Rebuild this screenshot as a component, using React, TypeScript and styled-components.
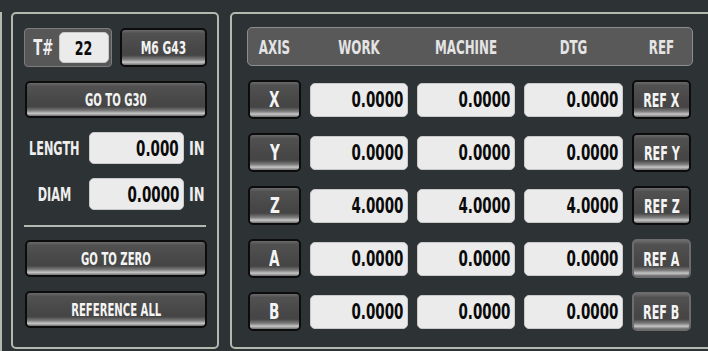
import React from 'react';
import styled, { createGlobalStyle } from 'styled-components';

const GlobalStyle = createGlobalStyle`
  html, body {
    margin: 0;
    padding: 0;
    background: #2d3235;
    overflow: hidden;
  }
  body {
    font-family: "DejaVu Sans Condensed", "DejaVu Sans", "Liberation Sans", sans-serif;
    font-weight: 700;
  }
`;

const Screen = styled.div`
  display: flex;
  align-items: flex-start;
  width: 708px;
  height: 351px;
  padding-top: 12px;
  box-sizing: border-box;
  overflow: hidden;
`;

const EdgeStub = styled.div`
  width: 0;
  height: 345px;
  border-right: 2px solid #b3b8b0;
  margin-right: 9px;
  flex-shrink: 0;
`;

const Panel = styled.div<{ $width: number }>`
  width: ${(p) => p.$width}px;
  height: 337px;
  flex-shrink: 0;
  box-sizing: border-box;
  border: 2px solid #b3b8b0;
  border-radius: 5px;
`;

const LeftPanel = styled(Panel)`
  display: flex;
  flex-direction: column;
  gap: 14px;
  padding: 14px 11px 0 11px;
`;

const RightPanel = styled(Panel)`
  margin-left: 11px;
  padding: 13px 0 0 15px;
  display: flex;
  flex-direction: column;
  gap: 14px;
`;

// condensed look: the reference face is much narrower than any installed one
const Caption = styled.span<{ $scale?: number; $origin?: string }>`
  display: inline-block;
  white-space: nowrap;
  transform: scaleX(${(p) => p.$scale ?? 0.66});
  transform-origin: ${(p) => p.$origin ?? 'center'};
`;

const Btn = styled.div<{ $h?: number; $size?: number; $muted?: boolean }>`
  height: ${(p) => p.$h ?? 37}px;
  box-sizing: border-box;
  display: flex;
  align-items: center;
  justify-content: center;
  border: 2px solid ${(p) => (p.$muted ? '#6c6c6c' : '#0c0c0c')};
  border-radius: 5px;
  color: #f4f4f4;
  font-size: ${(p) => p.$size ?? 17}px;
  background: linear-gradient(
    to bottom,
    #6a6a6a 0%,
    #515151 10%,
    #474747 55%,
    #454545 72%,
    #7d7d7d 84%,
    #c6c6c6 92%,
    #6e6e6e 100%
  );
`;

const ToolRow = styled.div`
  display: flex;
  gap: 8px;
  height: 39px;
`;

const ToolBox = styled.div`
  width: 88px;
  box-sizing: border-box;
  display: flex;
  align-items: center;
  justify-content: space-between;
  padding: 0 2px 0 4px;
  background: #575757;
  border: 1px solid #7c7c7c;
  border-radius: 4px;
  color: #eeeeee;
  font-size: 21px;
`;

const Entry = styled.div<{ $w?: number; $h?: number; $center?: boolean; $size?: number }>`
  ${(p) => (p.$w ? `width: ${p.$w}px;` : 'flex: 1;')}
  height: ${(p) => p.$h ?? 34}px;
  box-sizing: border-box;
  display: flex;
  align-items: center;
  justify-content: ${(p) => (p.$center ? 'center' : 'flex-end')};
  padding-right: ${(p) => (p.$center ? 0 : 4)}px;
  background: #ebebeb;
  border: 1px solid #c9c9c9;
  border-radius: 5px;
  color: #0a0a0a;
  font-size: ${(p) => p.$size ?? 22}px;
`;

const ToolBtn = styled(Btn)`
  flex: 1;
  margin-right: -1px;
`;

const FieldRow = styled.div`
  display: grid;
  grid-template-columns: 60px 95px auto;
  column-gap: 5px;
  align-items: center;
  height: 32px;
  color: #eeeeee;
  font-size: 19px;
`;

const FieldLabel = styled.div`
  display: flex;
  justify-content: center;
`;

const Unit = styled.div`
  display: flex;
  margin-left: 0;
  font-size: 20px;
`;

const Divider = styled.div`
  height: 2px;
  margin: 1px 0 -1px;
  background: #b3b8b0;
`;

const WideBtn = styled(Btn)`
  margin: 0 -1px 0 1px;
`;

const Grid = styled.div`
  display: grid;
  grid-template-columns: 53px 98px 98px 99px 59px;
  column-gap: 9px;
  align-items: center;
`;

const Header = styled(Grid)`
  width: 446px;
  height: 39px;
  box-sizing: border-box;
  background: #595959;
  border: 1px solid #8d8d8d;
  border-radius: 5px;
  color: #e4e4e4;
  font-size: 20px;
  text-align: center;
`;

const AxisRow = styled(Grid)`
  height: 39px;
  margin-left: 1px;
`;

const Value: React.FC<{ children: React.ReactNode }> = ({ children }) => (
  <Caption $scale={0.68} $origin="right center">{children}</Caption>
);

const axes = [
  { name: 'X', work: '0.0000', mach: '0.0000', dtg: '0.0000', homed: true },
  { name: 'Y', work: '0.0000', mach: '0.0000', dtg: '0.0000', homed: true },
  { name: 'Z', work: '4.0000', mach: '4.0000', dtg: '4.0000', homed: true },
  { name: 'A', work: '0.0000', mach: '0.0000', dtg: '0.0000', homed: false },
  { name: 'B', work: '0.0000', mach: '0.0000', dtg: '0.0000', homed: false },
];

const App: React.FC = () => {
  return (
    <>
      <GlobalStyle />
      <Screen>
        <EdgeStub />
        <LeftPanel $width={208}>
          <ToolRow>
            <ToolBox>
              <Caption $scale={0.7}>T#</Caption>
              <Entry $w={50} $h={31} $center $size={20}>
                <Caption $scale={0.7}>22</Caption>
              </Entry>
            </ToolBox>
            <ToolBtn $h={39} $size={18}>
              <Caption>M6 G43</Caption>
            </ToolBtn>
          </ToolRow>
          <WideBtn>
            <Caption>GO TO G30</Caption>
          </WideBtn>
          <FieldRow>
            <FieldLabel><Caption>LENGTH</Caption></FieldLabel>
            <Entry $h={32}><Value>0.000</Value></Entry>
            <Unit><Caption $scale={0.72} $origin="left center">IN</Caption></Unit>
          </FieldRow>
          <FieldRow>
            <FieldLabel><Caption>DIAM</Caption></FieldLabel>
            <Entry $h={32}><Value>0.0000</Value></Entry>
            <Unit><Caption $scale={0.72} $origin="left center">IN</Caption></Unit>
          </FieldRow>
          <Divider />
          <WideBtn>
            <Caption>GO TO ZERO</Caption>
          </WideBtn>
          <WideBtn>
            <Caption>REFERENCE ALL</Caption>
          </WideBtn>
        </LeftPanel>
        <RightPanel $width={500}>
          <Header>
            <Caption>AXIS</Caption>
            <Caption>WORK</Caption>
            <Caption>MACHINE</Caption>
            <Caption>DTG</Caption>
            <Caption>REF</Caption>
          </Header>
          {axes.map((a) => (
            <AxisRow key={a.name}>
              <Btn $h={39} $size={21}>
                <Caption $scale={0.72}>{a.name}</Caption>
              </Btn>
              <Entry><Value>{a.work}</Value></Entry>
              <Entry><Value>{a.mach}</Value></Entry>
              <Entry><Value>{a.dtg}</Value></Entry>
              <Btn $h={39} $size={20} $muted={!a.homed}>
                <Caption $scale={0.62}>REF {a.name}</Caption>
              </Btn>
            </AxisRow>
          ))}
        </RightPanel>
      </Screen>
    </>
  );
};

export default App;
